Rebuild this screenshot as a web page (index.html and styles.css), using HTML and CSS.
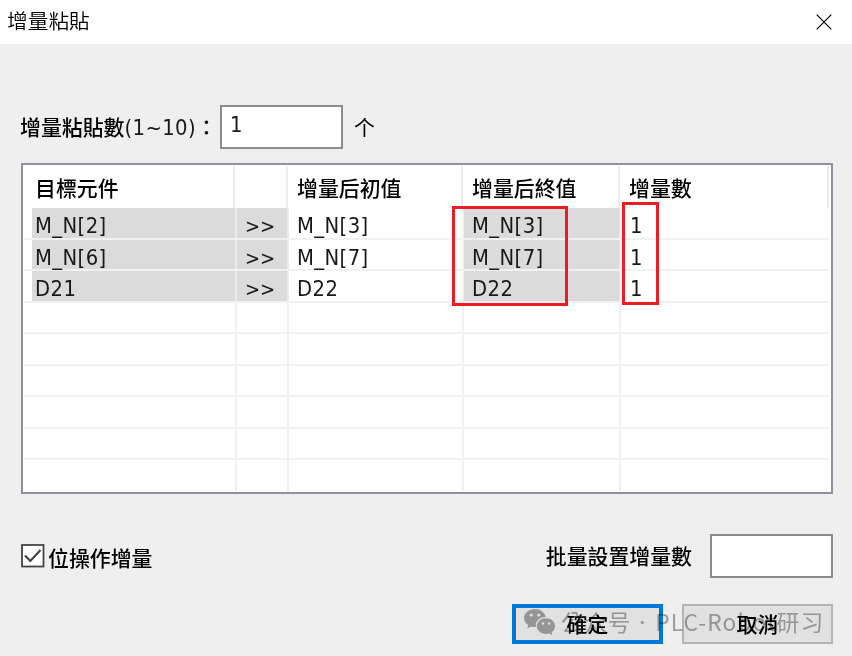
FILE: index.html
```html
<!DOCTYPE html>
<html lang="zh-Hant">
<head>
<meta charset="utf-8">
<title>增量粘貼</title>
<link rel="stylesheet" href="styles.css">
</head>
<body>
<div class="dialog">
  <header class="titlebar">
    <h1>增量粘貼</h1>
    <svg class="close" width="16" height="16" viewBox="0 0 16 16"><path d="M.7.7l14.6 14.6M15.3.7L.7 15.3"/></svg>
  </header>
  <div class="count">
    <label class="count-label">增量粘貼數<span class="latin">(1~10)</span>：</label>
    <div class="field latin">1</div>
    <span class="unit">个</span>
  </div>
  <div class="table">
    <div class="row head"><div>目標元件</div><div></div><div>增量后初值</div><div>增量后終值</div><div>增量數</div></div>
    <div class="body latin">
      <div class="row"><div class="shade">M_N[2]</div><div class="shade arrows">&gt;&gt;</div><div>M_N[3]</div><div class="shade">M_N[3]</div><div>1</div></div>
      <div class="row"><div class="shade">M_N[6]</div><div class="shade arrows">&gt;&gt;</div><div>M_N[7]</div><div class="shade">M_N[7]</div><div>1</div></div>
      <div class="row"><div class="shade">D21</div><div class="shade arrows">&gt;&gt;</div><div>D22</div><div class="shade">D22</div><div>1</div></div>
      <div class="row"><div></div><div></div><div></div><div></div><div></div></div>
      <div class="row"><div></div><div></div><div></div><div></div><div></div></div>
      <div class="row"><div></div><div></div><div></div><div></div><div></div></div>
      <div class="row"><div></div><div></div><div></div><div></div><div></div></div>
      <div class="row"><div></div><div></div><div></div><div></div><div></div></div>
      <div class="row last"><div></div><div></div><div></div><div></div><div></div></div>
    </div>
    <div class="mark mark-end"></div>
    <div class="mark mark-step"></div>
  </div>
  <div class="options">
    <div class="check">
      <svg width="24" height="24" viewBox="0 0 24 24"><rect x="1" y="1" width="21.500" height="21.500"/><path d="M4 11.500l5.300 5.500L19.500 6"/></svg>
      <span>位操作增量</span>
    </div>
    <span class="batch">批量設置增量數</span>
    <div class="field"></div>
  </div>
  <div class="actions">
    <div class="button primary">確定</div>
    <div class="button">取消</div>
  </div>
  <div class="watermark">
    <svg width="32" height="27" viewBox="0 0 32 27">
      <path d="M11 0C4.900 0 0 4 0 9c0 2.900 1.600 5.400 4.200 7L3.200 19.500l4-2.100c1.200.4 2.500.6 3.800.6h1C10.700 12.500 15.400 8 21.800 8 20.700 3.400 16.300 0 11 0z"/>
      <path d="M22 9.300c-5.200 0-9.200 3.400-9.200 7.800s4 7.800 9.200 7.800c1.100 0 2.200-.2 3.200-.5l3.200 1.800-.8-3c2.100-1.400 3.500-3.600 3.500-6.100 0-4.400-4-7.800-9.100-7.800z"/>
      <g class="eyes"><circle cx="7.200" cy="6.200" r="1.400"/><circle cx="14.800" cy="6.200" r="1.400"/><circle cx="19" cy="14.500" r="1.200"/><circle cx="25" cy="14.500" r="1.200"/></g>
    </svg>
    <span>公众号<span class="sep"> · </span><span class="name">PLC-Robot研习</span></span>
  </div>
</div>
</body>
</html>
```
FILE: styles.css
```css
* { box-sizing: border-box; }
body { margin: 0; background: #efefef; }
.dialog {
  position: relative;
  width: 852px;
  height: 656px;
  overflow: hidden;
  color: #000;
  font: 500 20.9px/30px "Noto Sans CJK TC", sans-serif;
  white-space: nowrap;
}
.latin {
  font-family: "DejaVu Sans Condensed", "DejaVu Sans", sans-serif;
  font-stretch: condensed;
  font-weight: 400;
  font-size: 21.8px;
  letter-spacing: .4px;
  color: #181818;
}
.titlebar {
  height: 44px;
  padding: 0 20px 0 7px;
  display: flex;
  align-items: center;
  justify-content: space-between;
  background: #fff;
}
.titlebar h1 { margin: 0 0 4px; font-size: 20.7px; font-weight: 350; }
.close { stroke: #000; stroke-width: 1.2; fill: none; }
.count {
  display: flex;
  height: 44px;
  margin: 61px 0 0 20px;
}
.count-label { width: 200px; padding-top: 6px; }
.field {
  width: 123px;
  height: 44px;
  padding: 3px 8px;
  border: 2px solid #8c8c8c;
  background: #fff;
}
.unit { padding: 6px 0 0 11px; font-weight: 400; }
.table {
  position: relative;
  margin: 14px 19px 0 21px;
  height: 331px;
  border: 2px solid #8d929b;
  background: #fff;
}
.row {
  display: grid;
}
.head {
  height: 43px;
  padding: 1px 2px 0 8px;
  grid-template-columns: 204px 53px 175px 157px 1fr;
}
.head div { padding: 6px 0 0 9px; border-right: 2px solid #ececec; }
.head div:first-child { padding-left: 4px; }
.body { padding: 0 2px 0 9px; }
.body .row {
  height: 31.5px;
  grid-template-columns: 205px 52px 175px 157px 1fr;
  grid-template-rows: 100%;
  border-bottom: 2px solid #f1f1f1;
  margin-left: -8px;
  padding-left: 8px;
}
.body .row > div { padding-left: 8px; border-right: 2px solid #f1f1f1; line-height: 35px; }
.body .row > div:first-child { padding-left: 3px; }
.body .row > div:last-child { padding-left: 9px; border-right: 0; }
.body .row > .shade { background: #dbdbdb; border-color: #eaeaea; }
.body .row .arrows { letter-spacing: 0; font-size: 20px; line-height: 36px; }
.body .row.last { border-bottom: 0; height: 31px; }
.mark { position: absolute; border: 3px solid #ed1c24; }
.mark-end { left: 429px; top: 41px; width: 116px; height: 100px; }
.mark-step { left: 599px; top: 37px; width: 37px; height: 103px; }
.options {
  display: flex;
  height: 44px;
  margin: 40px 19px 0 21px;
}
.check { display: flex; align-items: center; gap: 3px; }
.check span { padding-top: 1px; }
.check svg { fill: #fff; stroke: #444; stroke-width: 1.8; }
.check path { fill: none; stroke-width: 2.2; }
.batch { margin-left: auto; padding: 6px 18px 0 0; }
.actions {
  display: flex;
  justify-content: flex-end;
  gap: 19px;
  margin: 26px 19px 0 0;
}
.button {
  width: 151px;
  height: 40px;
  border: 2px solid #b4b4b4;
  background: #e1e1e1;
  line-height: 35px;
  text-align: center;
}
.button.primary { border: 4px solid #0078d7; line-height: 31px; }
.watermark {
  position: absolute;
  left: 524px;
  top: 609px;
  display: flex;
  gap: 5px;
  color: #a9a9a9;
  font: 400 22.7px/25px "Noto Sans CJK SC", sans-serif;
  letter-spacing: .75px;
  mix-blend-mode: multiply;
}
.watermark .sep { font-family: "Noto Sans", sans-serif; letter-spacing: 2px; }
.watermark .name { letter-spacing: 1.1px; }
.watermark svg { fill: #aaa; }
.watermark .eyes { fill: #fff; }
```
